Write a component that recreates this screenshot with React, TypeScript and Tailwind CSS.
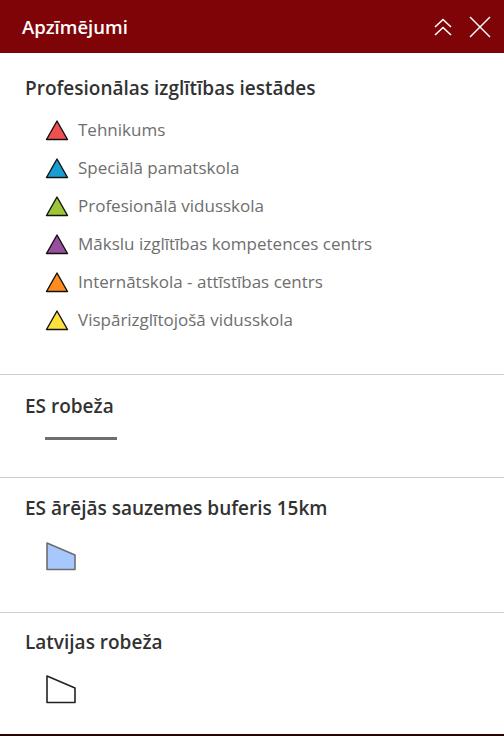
const items = [
  { label: 'Tehnikums', color: '#ef5050' },
  { label: 'Speciālā pamatskola', color: '#189ed2' },
  { label: 'Profesionālā vidusskola', color: '#9cc53a' },
  { label: 'Mākslu izglītības kompetences centrs', color: '#9a4e9e' },
  { label: 'Internātskola - attīstības centrs', color: '#ff8c1c' },
  { label: 'Vispārizglītojošā vidusskola', color: '#ffe13c' },
]

function Triangle({ color }: { color: string }) {
  return (
    <svg width="24" height="22" viewBox="0 0 24 22">
      <polygon points="12,2 22.5,20.5 1.5,20.5" fill={color} stroke="#111" strokeWidth="1.4" strokeLinejoin="round" />
    </svg>
  )
}

function Shape({ fill, stroke }: { fill: string; stroke: string }) {
  return (
    <svg width="32" height="30" viewBox="0 0 32 30">
      <polygon points="2,2 30,14 30,28.5 2,28.5" fill={fill} stroke={stroke} strokeWidth="1.6" strokeLinejoin="round" />
    </svg>
  )
}

export default function App() {
  return (
    <div className="w-[504px] h-[736px] bg-white flex flex-col border-b-2 border-[#2a0000]" style={{ fontFamily: '"Open Sans", sans-serif' }}>
      {/* Galvene */}
      <div className="h-[53px] bg-[#7f0408] flex items-center pl-[22px] pr-[13px] text-white">
        <div className="text-[18.5px] font-semibold flex-1">Apzīmējumi</div>
        <svg width="20" height="20" viewBox="0 0 20 20" fill="none" stroke="white" strokeWidth="1.6" className="mr-[16px] mt-[2px]">
          <polyline points="2,9 10,1.5 18,9" />
          <polyline points="2,17 10,9.5 18,17" />
        </svg>
        <svg width="22" height="22" viewBox="0 0 22 22" fill="none" stroke="white" strokeWidth="1.5">
          <line x1="1" y1="1" x2="21" y2="21" />
          <line x1="21" y1="1" x2="1" y2="21" />
        </svg>
      </div>

      {/* Profesionālās iestādes */}
      <section className="pl-[25px] pt-[24px] h-[322px] border-b border-[#cfcfcf]">
        <h2 className="text-[19px] font-semibold text-[#323232] leading-[22px]">Profesionālas izglītības iestādes</h2>
        <div className="mt-[20px] pl-[20px] flex flex-col gap-[16px]">
          {items.map((it, i) => (
            <div key={i} className="flex items-center h-[22px]">
              <Triangle color={it.color} />
              <span className="ml-[9px] text-[17px] text-[#6e6e6e]">{it.label}</span>
            </div>
          ))}
        </div>
      </section>

      <section className="pl-[25px] pt-[20px] h-[103px] border-b border-[#cfcfcf]">
        <h2 className="text-[19px] font-semibold text-[#323232] leading-[22px]">ES robeža</h2>
        <div className="mt-[20px] ml-[20px] w-[72px] h-[3px] bg-[#6e6e6e]" />
      </section>

      <section className="pl-[25px] pt-[19px] h-[135px] border-b border-[#cfcfcf]">
        <h2 className="text-[19px] font-semibold text-[#323232] leading-[22px]">ES ārējās sauzemes buferis 15km</h2>
        <div className="mt-[22px] ml-[20px]">
          <Shape fill="#a6c8ff" stroke="#6e6e6e" />
        </div>
      </section>

      <section className="pl-[25px] pt-[18px] flex-1">
        <h2 className="text-[19px] font-semibold text-[#323232] leading-[22px]">Latvijas robeža</h2>
        <div className="mt-[21px] ml-[20px]">
          <Shape fill="#ffffff" stroke="#222" />
        </div>
      </section>
    </div>
  )
}
